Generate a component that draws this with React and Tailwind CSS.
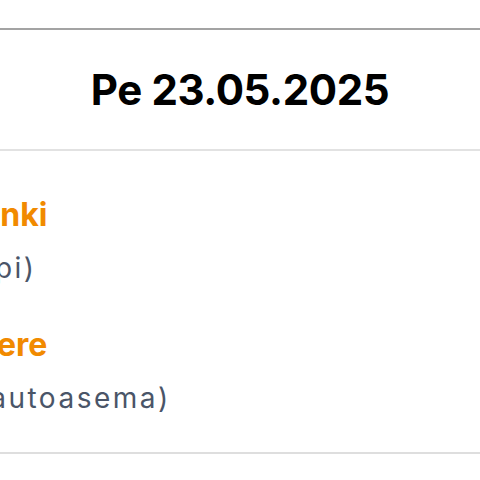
import React from 'react';

const stops = [
    { city: 'Helsinki', place: '(Kamppi)', cityShift: '-ml-[78px]', placeShift: '-ml-[104px]', gap: 'mt-0' },
    { city: 'Tampere', place: '(linja-autoasema)', cityShift: '-ml-[90px]', placeShift: '-ml-[103px]', gap: 'mt-[39px]' }
];

const App = () => {
    return (
        <div className="w-[480px] h-[480px] bg-white overflow-hidden font-['Inter','Liberation_Sans',sans-serif]">
            <div className="h-[28px]" />

            {/* Date header */}
            <div className="h-[123px] border-t-2 border-[#a3a3a3] border-b-2 border-b-[#e2e2e2] flex items-center justify-center">
                <h1 className="text-[42px] leading-none font-bold tracking-[-0.4px] text-black">Pe 23.05.2025</h1>
            </div>

            {/* Stops */}
            <div className="pt-[44px] pb-[36px] border-b-2 border-[#dedede]">
                {stops.map((stop, i) => (
                    <div key={i} className={`${stop.gap} whitespace-nowrap`}>
                        <div className={`${stop.cityShift} text-[32px] leading-[40px] font-bold text-[#f18a00]`}>{stop.city}</div>
                        <div className={`${stop.placeShift} mt-[15px] text-[28px] leading-[36px] tracking-[2.5px] text-[#4a5568]`}>{stop.place}</div>
                    </div>
                ))}
            </div>
        </div>
    );
};

export default App;
